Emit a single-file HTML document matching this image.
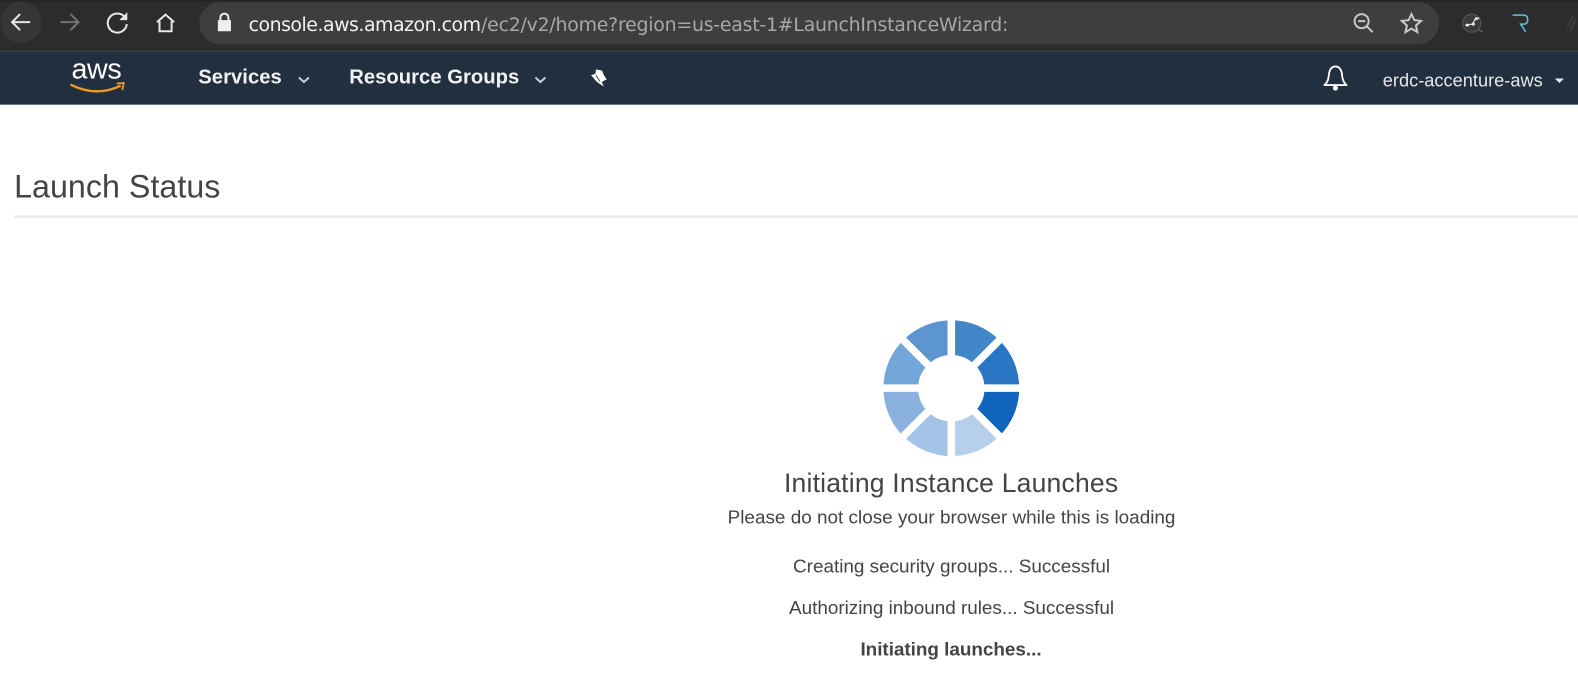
<!DOCTYPE html>
<html><head><meta charset="utf-8"><title>Launch Status</title>
<style>html,body{margin:0;padding:0;background:#fff;width:1578px;height:700px;overflow:hidden}svg{display:block;font-family:"Liberation Sans",sans-serif}</style></head>
<body>
<svg width="1578" height="700" viewBox="0 0 1568 695.56" xmlns="http://www.w3.org/2000/svg">
<rect width="1568" height="696" fill="#fff"/>
<rect width="1568" height="50" fill="#2c2c2c"/>
<rect y="0" width="1568" height="2" fill="#252525"/>
<rect y="50" width="1568" height="1" fill="#141414"/>
<rect y="51" width="1568" height="53" fill="#222f3f"/>
<circle cx="21" cy="22" r="20.5" fill="#363636"/>
<rect x="198" y="2" width="1232" height="42" rx="21" fill="#3e3e3e"/>
<g fill="none" stroke-width="2">
<path d="M30 22H12M20 14l-8 8 8 8" stroke="#e6e6e6"/>
<path d="M60 22H78M70 14l8 8-8 8" stroke="#737373"/>
<path d="M124 17A9.500 9.500 0 1 0 126 24" stroke="#e6e6e6"/>
<path d="M156 22L164.500 14.500 173 22M158.500 21V31H170.500V21" stroke="#e6e6e6"/>
<circle cx="1353" cy="21" r="7" stroke="#c8c8c8"/><path d="M1358 26l6 6M1349.500 21h7" stroke="#c8c8c8"/>
<path d="M1402.500 14l2.800 6 6.700 .800-5 4.500 1.400 6.600-5.900-3.400-5.900 3.400 1.400-6.600-5-4.500 6.700-.800z" stroke="#c8c8c8"/>
</g>
<path d="M126.500 12v8h-8z" fill="#e6e6e6"/>
<path d="M218 20v-2.500a5 5 0 0 1 10 0V20h1.500V31h-13V20zM220 20h6v-2.500a3 3 0 0 0-6 0z" fill="#eee" fill-rule="evenodd"/>
<text x="247" y="31" font-size="18.800" fill="#f2f2f2" textLength="231" style="font-family:'DejaVu Sans',sans-serif">console.aws.amazon.com</text>
<text x="478" y="31" font-size="18.800" fill="#a8a8a8" textLength="524" style="font-family:'DejaVu Sans',sans-serif">/ec2/v2/home?region=us-east-1#LaunchInstanceWizard:</text>
<circle cx="1462.500" cy="23" r="9" fill="#3a3a3a" stroke="#5c5c5c" stroke-width="1"/>
<path d="M1456 25l7-1 3-5 4-1" fill="none" stroke="#ddd" stroke-width="1.300"/>
<circle cx="1458" cy="25" r="1.500" fill="#eee"/><circle cx="1464" cy="24" r="1.500" fill="#eee"/><circle cx="1467" cy="18.500" r="1.500" fill="#eee"/>
<path d="M1469 29l4 3" stroke="#555" stroke-width="2"/>
<path d="M1503 15h11q4 0 4 4.500t-4 4.500h-3l5 7.500" fill="none" stroke="#62c3dc" stroke-width="1.500"/>
<path d="M1557 28l7-13M1560 31l6-12" stroke="#3d3d3d" stroke-width="2"/>
<text x="71" y="78" font-size="28.500" fill="#fff" textLength="50">aws</text>
<path d="M70 84Q96 97 120 85" fill="none" stroke="#f49a1e" stroke-width="2.300"/>
<path d="M116 83l7-.500-1.500 7" fill="none" stroke="#f49a1e" stroke-width="1.800"/>
<g font-weight="bold" font-size="20.100" fill="#f1f2f3">
<text x="197" y="83" textLength="83">Services</text>
<text x="347" y="83" textLength="169">Resource Groups</text>
</g>
<g fill="none" stroke="#c9ccd0" stroke-width="2"><path d="M297 77l5 4.500 5-4.500"/><path d="M532 77l5 4.500 5-4.500"/></g>
<g transform="scale(.99366) translate(400,0) scale(.33333)">
<path d="M588 208L606 212 612 226 620 238 605 246 612 260 597 250 588 243 573 225 586 222Z" fill="#fff"/>
<path d="M588 226L600 244" stroke="#222f3f" stroke-width="2.500"/>
</g>
<path d="M1316 84.500h22c-3.500-3-4-6-4.500-10.500-.5-5-3-8-6.500-8s-6 3-6.500 8c-.5 4.500-1 7.500-4.500 10.500z" fill="none" stroke="#fff" stroke-width="1.800" stroke-linejoin="round"/>
<circle cx="1327" cy="87.500" r="2.500" fill="#fff"/>
<text x="1374" y="86" font-size="18.100" fill="#e6e7e9" textLength="159">erdc-accenture-aws</text>
<path d="M1545 78h9l-4.500 4.500z" fill="#e6e7e9"/>
<text x="14" y="196" font-size="32" fill="#444" textLength="205">Launch Status</text>
<rect x="14" y="214" width="1554" height="2.500" fill="#ececec"/>
<g transform="translate(-0.2,-1.800)">
<path d="M945.500 320A67.500 67.500 0 0 1 993.200 339.800L968.800 364.200A33 33 0 0 0 945.500 354.500Z" fill="#4286c9"/>
<path d="M993.200 339.800A67.500 67.500 0 0 1 1013 387.500H978.500A33 33 0 0 0 968.800 364.200Z" fill="#2a76c5"/>
<path d="M1013 387.500A67.500 67.500 0 0 1 993.200 435.200L968.800 410.800A33 33 0 0 0 978.500 387.500Z" fill="#1064bb"/>
<path d="M993.200 435.200A67.500 67.500 0 0 1 945.500 455V420.500A33 33 0 0 0 968.800 410.800Z" fill="#b6d0eb"/>
<path d="M945.500 455A67.500 67.500 0 0 1 897.800 435.200L922.200 410.800A33 33 0 0 0 945.500 420.500Z" fill="#a3c4e7"/>
<path d="M897.800 435.200A67.500 67.500 0 0 1 878 387.500H912.500A33 33 0 0 0 922.200 410.800Z" fill="#8ab1de"/>
<path d="M878 387.500A67.500 67.500 0 0 1 897.800 339.800L922.200 364.200A33 33 0 0 0 912.500 387.500Z" fill="#73a6d9"/>
<path d="M897.800 339.800A67.500 67.500 0 0 1 945.500 320V354.500A33 33 0 0 0 922.200 364.200Z" fill="#5c95d2"/>
<path d="M945.500 315V460M873 387.500H1018M894 336L997 439M997 336L894 439" stroke="#fff" stroke-width="7.500" fill="none"/>
</g>
<g fill="#444" text-anchor="start">
<text x="779" y="489" font-size="26.350" textLength="332">Initiating Instance Launches</text>
<text x="723" y="520" font-size="18.800" textLength="445">Please do not close your browser while this is loading</text>
<text x="788" y="569" font-size="18.800" textLength="315">Creating security groups... Successful</text>
<text x="784" y="610" font-size="18.800" textLength="323">Authorizing inbound rules... Successful</text>
<text x="855" y="651.500" font-size="18.800" font-weight="bold" textLength="180">Initiating launches...</text>
</g>
</svg>
</body></html>
